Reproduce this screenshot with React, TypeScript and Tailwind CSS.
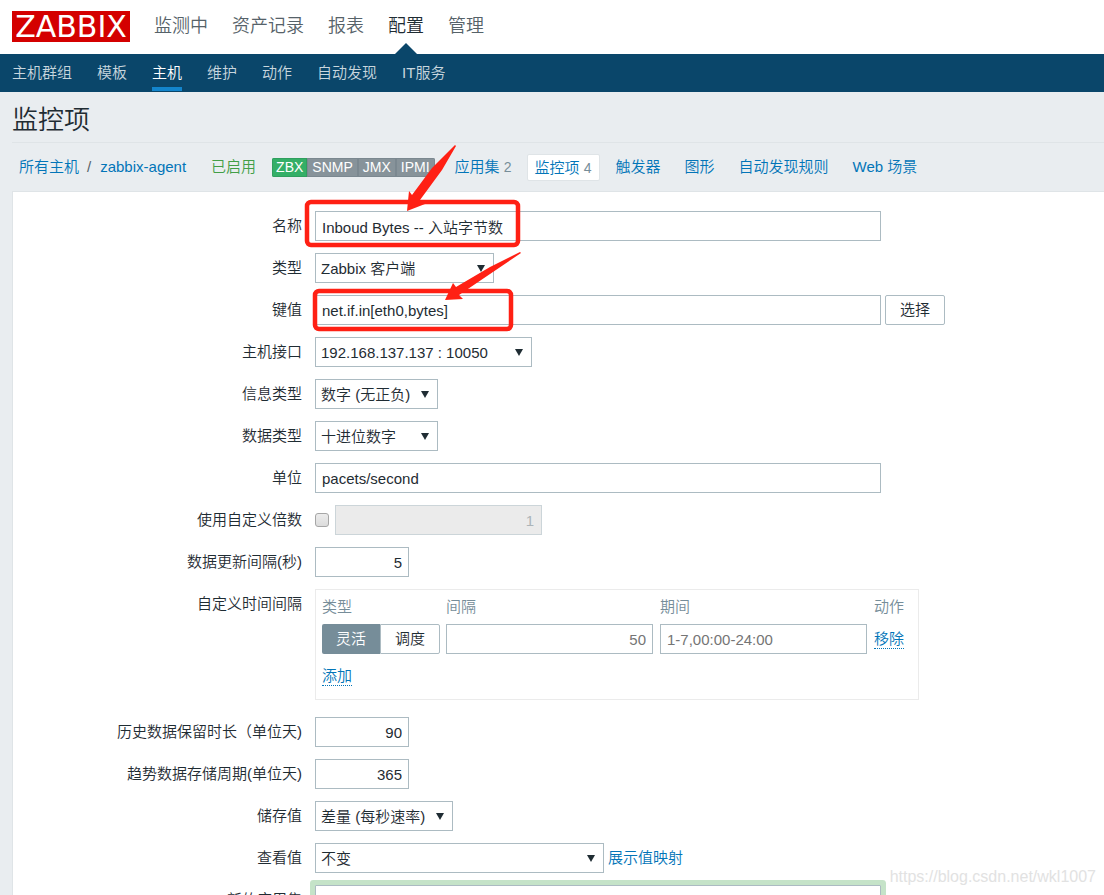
import type { ReactNode } from "react";

const mainMenu = ["监测中", "资产记录", "报表", "配置", "管理"];
const subMenu = ["主机群组", "模板", "主机", "维护", "动作", "自动发现", "IT服务"];
const interfaces = ["ZBX", "SNMP", "JMX", "IPMI"];

const inputClass =
  "h-[30px] border border-[#acbbc2] bg-white px-[6px] text-[15px] text-[#1f2c33] placeholder:text-[#757575] outline-none";
const linkClass = "text-[#0275b8]";
const dottedLink = "inline-block border-b border-dotted border-[#0275b8] leading-[18px] text-[#0275b8]";

interface RowProp {
  id?: string;
  label: string;
  children: ReactNode;
}

function Row({ id, label, children }: RowProp) {
  return (
    <div className="flex items-start gap-[13px]">
      <label htmlFor={id} className="w-[289px] shrink-0 text-right leading-[30px]">
        {label}
      </label>
      <div className="flex items-center">{children}</div>
    </div>
  );
}

interface SelectProp {
  id: string;
  value: string;
  width: string;
}

function Select({ id, value, width }: SelectProp) {
  return (
    <div className={`relative ${width}`}>
      <select
        id={id}
        className="block h-[30px] w-full appearance-none border border-[#acbbc2] bg-white pt-[3px] pr-5 pl-[5px] text-[15px] text-[#1f2c33] outline-none"
      >
        <option>{value}</option>
      </select>
      <svg viewBox="0 0 8 7" className="pointer-events-none absolute top-3 right-[9px] h-[7px] w-2">
        <path d="M0 0H8L4 7Z" fill="#1f2c33" />
      </svg>
    </div>
  );
}

function Header() {
  return (
    <header>
      <div className="flex h-[54px] items-start bg-white pl-3">
        <a
          href="#"
          className="mt-[11px] mr-6 flex h-[31px] w-[118px] items-center justify-center bg-[#d40000] font-['DejaVu_Sans',sans-serif] text-[30px] leading-[31px] font-normal text-white"
        >
          ZABBIX
        </a>
        <nav className="flex gap-6 text-[18px] leading-[52px]">
          {mainMenu.map((item) => (
            <a
              key={item}
              href="#"
              className={item === "配置" ? "relative h-[54px] text-[#1f2c33]" : "h-[54px] text-[#566269]"}
            >
              {item}
              {item === "配置" && (
                <svg viewBox="0 0 22 11" className="absolute bottom-0 left-[7px] h-[11px] w-[22px]">
                  <path d="M11 0L22 11H0Z" fill="#0a466a" />
                </svg>
              )}
            </a>
          ))}
        </nav>
      </div>
      <nav className="flex h-[38px] gap-[25px] bg-[#0a466a] pl-3 leading-[38px]">
        {subMenu.map((item) => (
          <a
            key={item}
            href="#"
            className={
              item === "主机"
                ? "mb-px border-b-4 border-[#1385cc] text-white"
                : "text-[#c8d6de]"
            }
          >
            {item}
          </a>
        ))}
      </nav>
    </header>
  );
}

function HostBar() {
  return (
    <div className="ml-3 flex h-[49px] shrink-0 items-center border-t border-[#dfe4e7] pl-[7px] whitespace-nowrap">
      <a href="#" className={linkClass}>所有主机</a>
      <span className="mr-[9px] ml-2 text-[#566269]">/</span>
      <a href="#" className={linkClass}>zabbix-agent</a>
      <span className="ml-[25px] text-[#429e47]">已启用</span>
      <div className="ml-4 flex h-[19px] overflow-hidden rounded-[2px] text-[14px] leading-[17px] text-white">
        {interfaces.map((item) => (
          <span
            key={item}
            className={
              item === "ZBX"
                ? "border border-[#2f9f5e] bg-[#34af67] px-[3px]"
                : "border border-[#7b8890] bg-[#87939a] px-1"
            }
          >
            {item}
          </span>
        ))}
      </div>
      <a href="#" className="ml-5 text-[#0275b8]">
        应用集 <span className="text-[14px] text-[#768d99]">2</span>
      </a>
      <a href="#" className="ml-[15px] h-[27px] rounded-[2px] border border-[#dfe4e7] bg-white px-[7px] leading-[25px] text-[#0275b8]">
        监控项 <span className="text-[14px] text-[#768d99]">4</span>
      </a>
      <div className="ml-4 flex gap-6">
        <a href="#" className={linkClass}>触发器</a>
        <a href="#" className={linkClass}>图形</a>
        <a href="#" className={linkClass}>自动发现规则</a>
        <a href="#" className={linkClass}>Web 场景</a>
      </div>
    </div>
  );
}

function Intervals() {
  return (
    <div className="mb-[5px] w-[604px] border border-[#ebebeb] px-[6px]">
      <table className="w-full table-fixed border-collapse text-left">
        <thead>
          <tr className="h-[34px] text-[#768d99]">
            <th className="w-[124px] p-0 font-[350]">类型</th>
            <th className="w-[214px] p-0 font-[350]">间隔</th>
            <th className="w-[214px] p-0 font-[350]">期间</th>
            <th className="p-0 font-[350]">动作</th>
          </tr>
        </thead>
        <tbody>
          <tr className="h-[30px]">
            <td className="p-0">
              <div className="flex w-[118px] text-center">
                <button type="button" className="h-[30px] flex-1 rounded-l-[2px] bg-[#768d99] text-white">
                  灵活
                </button>
                <button type="button" className="h-[30px] flex-1 rounded-r-[2px] border border-[#acbbc2] bg-white">
                  调度
                </button>
              </div>
            </td>
            <td className="p-0">
              <input aria-label="间隔" placeholder="50" className={`${inputClass} block w-[207px] text-right`} />
            </td>
            <td className="p-0">
              <input aria-label="期间" placeholder="1-7,00:00-24:00" className={`${inputClass} block w-[207px]`} />
            </td>
            <td className="p-0">
              <a href="#" className={dottedLink}>移除</a>
            </td>
          </tr>
        </tbody>
      </table>
      <div className="flex h-[45px] items-center">
        <a href="#" className={dottedLink}>添加</a>
      </div>
    </div>
  );
}

// red marker strokes drawn over the first form rows
function Markers() {
  return (
    <svg
      viewBox="0 0 240 195"
      className="pointer-events-none absolute -top-[51px] left-[288px] h-[195px] w-[240px]"
      fill="none"
    >
      <g stroke="#ff2014" strokeWidth="4.5">
        <rect x="6" y="61" width="211" height="43" rx="4" />
        <rect x="14" y="150" width="196" height="38" rx="4" />
      </g>
      <g fill="#ff2014">
        <path d="M154 4L131 27L111 54L108 50L106 70L124 63L119 59L141 29L155 5Z" />
        <path d="M219 111L189 126L155 146L152 142L144 159L162 158L158 154L189 133L220 112Z" />
      </g>
    </svg>
  );
}

export default function App() {
  return (
    <div className="relative flex h-screen flex-col overflow-hidden bg-[#e9edf0] font-['Liberation_Sans','Noto_Sans_CJK_SC',sans-serif] text-[15px] font-[350] text-[#1f2c33]">
      <Header />
      <h1 className="pt-[6px] pl-3 text-[26px] leading-[44px]">监控项</h1>
      <HostBar />
      <main className="relative ml-3 grow border-t border-l border-[#dfe4e7] bg-white pt-[19px]">
        <form className="flex flex-col gap-3">
          <Row id="name" label="名称">
            <input id="name" defaultValue="Inboud Bytes -- 入站字节数" className={`${inputClass} w-[566px]`} />
          </Row>
          <Row id="type" label="类型">
            <Select id="type" value="Zabbix 客户端" width="w-[179px]" />
          </Row>
          <Row id="key" label="键值">
            <input id="key" defaultValue="net.if.in[eth0,bytes]" className={`${inputClass} w-[566px]`} />
            <button type="button" className="ml-1 h-[30px] w-[60px] rounded-[2px] border border-[#acbbc2] bg-white">
              选择
            </button>
          </Row>
          <Row id="interface" label="主机接口">
            <Select id="interface" value="192.168.137.137 : 10050" width="w-[217px]" />
          </Row>
          <Row id="value-type" label="信息类型">
            <Select id="value-type" value="数字 (无正负)" width="w-[123px]" />
          </Row>
          <Row id="data-type" label="数据类型">
            <Select id="data-type" value="十进位数字" width="w-[123px]" />
          </Row>
          <Row id="units" label="单位">
            <input id="units" defaultValue="pacets/second" className={`${inputClass} w-[566px]`} />
          </Row>
          <Row id="multiplier" label="使用自定义倍数">
            <input
              id="multiplier"
              type="checkbox"
              className="mr-[6px] size-[14px] appearance-none rounded-[3px] border border-[#a6a6a6] bg-linear-to-b from-[#ececec] to-[#dcdcdc]"
            />
            <input
              aria-label="倍数"
              disabled
              defaultValue="1"
              className="h-[30px] w-[207px] border border-[#ccd5d9] bg-[#ebebeb] px-[7px] text-right text-[#acb4b8]"
            />
          </Row>
          <Row id="delay" label="数据更新间隔(秒)">
            <input id="delay" defaultValue="5" className={`${inputClass} w-[94px] text-right`} />
          </Row>
          <Row label="自定义时间间隔">
            <Intervals />
          </Row>
          <Row id="history" label="历史数据保留时长（单位天)">
            <input id="history" defaultValue="90" className={`${inputClass} w-[94px] text-right`} />
          </Row>
          <Row id="trends" label="趋势数据存储周期(单位天)">
            <input id="trends" defaultValue="365" className={`${inputClass} w-[94px] text-right`} />
          </Row>
          <Row id="delta" label="储存值">
            <Select id="delta" value="差量 (每秒速率)" width="w-[138px]" />
          </Row>
          <Row id="valuemap" label="查看值">
            <Select id="valuemap" value="不变" width="w-[289px]" />
            <a href="#" className="ml-1 text-[#0275b8]">展示值映射</a>
          </Row>
          <Row id="application" label="新的应用集">
            <input id="application" className={`${inputClass} w-[566px] rounded-[1px] ring-5 ring-[#c5e3c8]`} />
          </Row>
        </form>
        <Markers />
      </main>
      <span className="absolute right-2 bottom-2 text-[16px] leading-5 text-[#e2e2e2]">
        https://blog.csdn.net/wkl1007
      </span>
    </div>
  );
}
